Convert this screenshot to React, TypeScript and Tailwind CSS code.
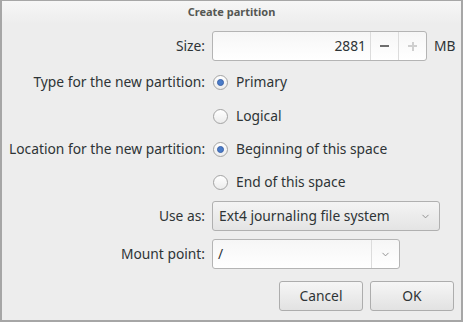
import { ChevronDown } from 'lucide-react';

const font = { fontFamily: '"Noto Sans", "Open Sans", sans-serif' };

const Radio = ({ checked, label }: { checked?: boolean; label: string }) => (
  <div className="flex items-center h-[20px]">
    <div className="w-[15px] h-[15px] rounded-full border border-[#a3a3a3] bg-gradient-to-b from-white to-[#ececec] flex items-center justify-center ml-[1px]">
      {checked && <div className="w-[7px] h-[7px] rounded-full bg-[#4a7cc9] border border-[#3d63a8]"></div>}
    </div>
    <span className="ml-[8px]">{label}</span>
  </div>
);

const Label = ({ children }: { children: React.ReactNode }) => (
  <div className="w-[196px] text-right shrink-0 whitespace-nowrap">{children}</div>
);

export default function App() {
  return (
    <div
      className="w-[463px] h-[322px] bg-[#ededed] text-[#2e3436] text-[13.8px] border-x-2 border-b-2 border-t border-[#a6a6a6] flex flex-col overflow-hidden"
      style={font}
    >
      {/* title bar */}
      <div className="h-[23px] shrink-0 bg-gradient-to-b from-[#f6f6f6] to-[#ededed] flex items-center justify-center">
        <span className="text-[11px] font-bold text-[#555753]">Create partition</span>
      </div>

      <div className="flex flex-col pl-[7px]">
        {/* size */}
        <div className="flex items-center gap-[7px] mt-[7px] h-[30px]">
          <Label>Size:</Label>
          <div className="flex h-[30px] w-[215px] rounded-[3px] border border-[#b4b4b4] bg-gradient-to-b from-[#f6f6f6] to-white">
            <div className="flex-1 flex items-center justify-end pr-[4px]">2881</div>
            <div className="w-[28px] border-l border-[#dcdcdc] flex items-center justify-center">
              <div className="w-[9px] h-[2px] bg-[#6e6e6e]"></div>
            </div>
            <div className="w-[28px] border-l border-[#dcdcdc] flex items-center justify-center relative">
              <div className="w-[9px] h-[2px] bg-[#cfcfcf]"></div>
              <div className="absolute w-[2px] h-[9px] bg-[#cfcfcf]"></div>
            </div>
          </div>
          <span>MB</span>
        </div>

        {/* type */}
        <div className="flex items-center gap-[7px] mt-[11px]">
          <Label>Type for the new partition:</Label>
          <Radio checked label="Primary" />
        </div>
        <div className="flex items-center gap-[7px] mt-[14px]">
          <Label> </Label>
          <Radio label="Logical" />
        </div>

        {/* location */}
        <div className="flex items-center gap-[7px] mt-[12px]">
          <Label>Location for the new partition:</Label>
          <Radio checked label="Beginning of this space" />
        </div>
        <div className="flex items-center gap-[7px] mt-[13px]">
          <Label> </Label>
          <Radio label="End of this space" />
        </div>

        {/* use as */}
        <div className="flex items-center gap-[7px] mt-[9px]">
          <Label>Use as:</Label>
          <div className="flex items-center h-[30px] w-[228px] rounded-[3px] border border-[#b0b0b0] bg-gradient-to-b from-[#f4f4f4] to-[#e4e4e4] pl-[6px] pr-[8px]">
            <span className="flex-1">Ext4 journaling file system</span>
            <ChevronDown size={11} strokeWidth={2} className="text-[#8a8a8a]" />
          </div>
        </div>

        {/* mount point */}
        <div className="flex items-center gap-[7px] mt-[8px]">
          <Label>Mount point:</Label>
          <div className="flex h-[30px] w-[188px] rounded-[3px] border border-[#b4b4b4] bg-gradient-to-b from-[#f6f6f6] to-white">
            <div className="flex-1 flex items-center pl-[5px]">/</div>
            <div className="w-[28px] border-l border-[#dcdcdc] flex items-center justify-center">
              <ChevronDown size={11} strokeWidth={2} className="text-[#8a8a8a]" />
            </div>
          </div>
        </div>

        {/* buttons */}
        <div className="flex justify-end gap-[7px] mt-[12px] pr-[7px]">
          <button className="w-[84px] h-[30px] rounded-[3px] border border-[#adadad] bg-gradient-to-b from-[#f6f6f6] to-[#e2e2e2]">
            Cancel
          </button>
          <button className="w-[84px] h-[30px] rounded-[3px] border border-[#adadad] bg-gradient-to-b from-[#f6f6f6] to-[#e2e2e2]">
            OK
          </button>
        </div>
      </div>
    </div>
  );
}
